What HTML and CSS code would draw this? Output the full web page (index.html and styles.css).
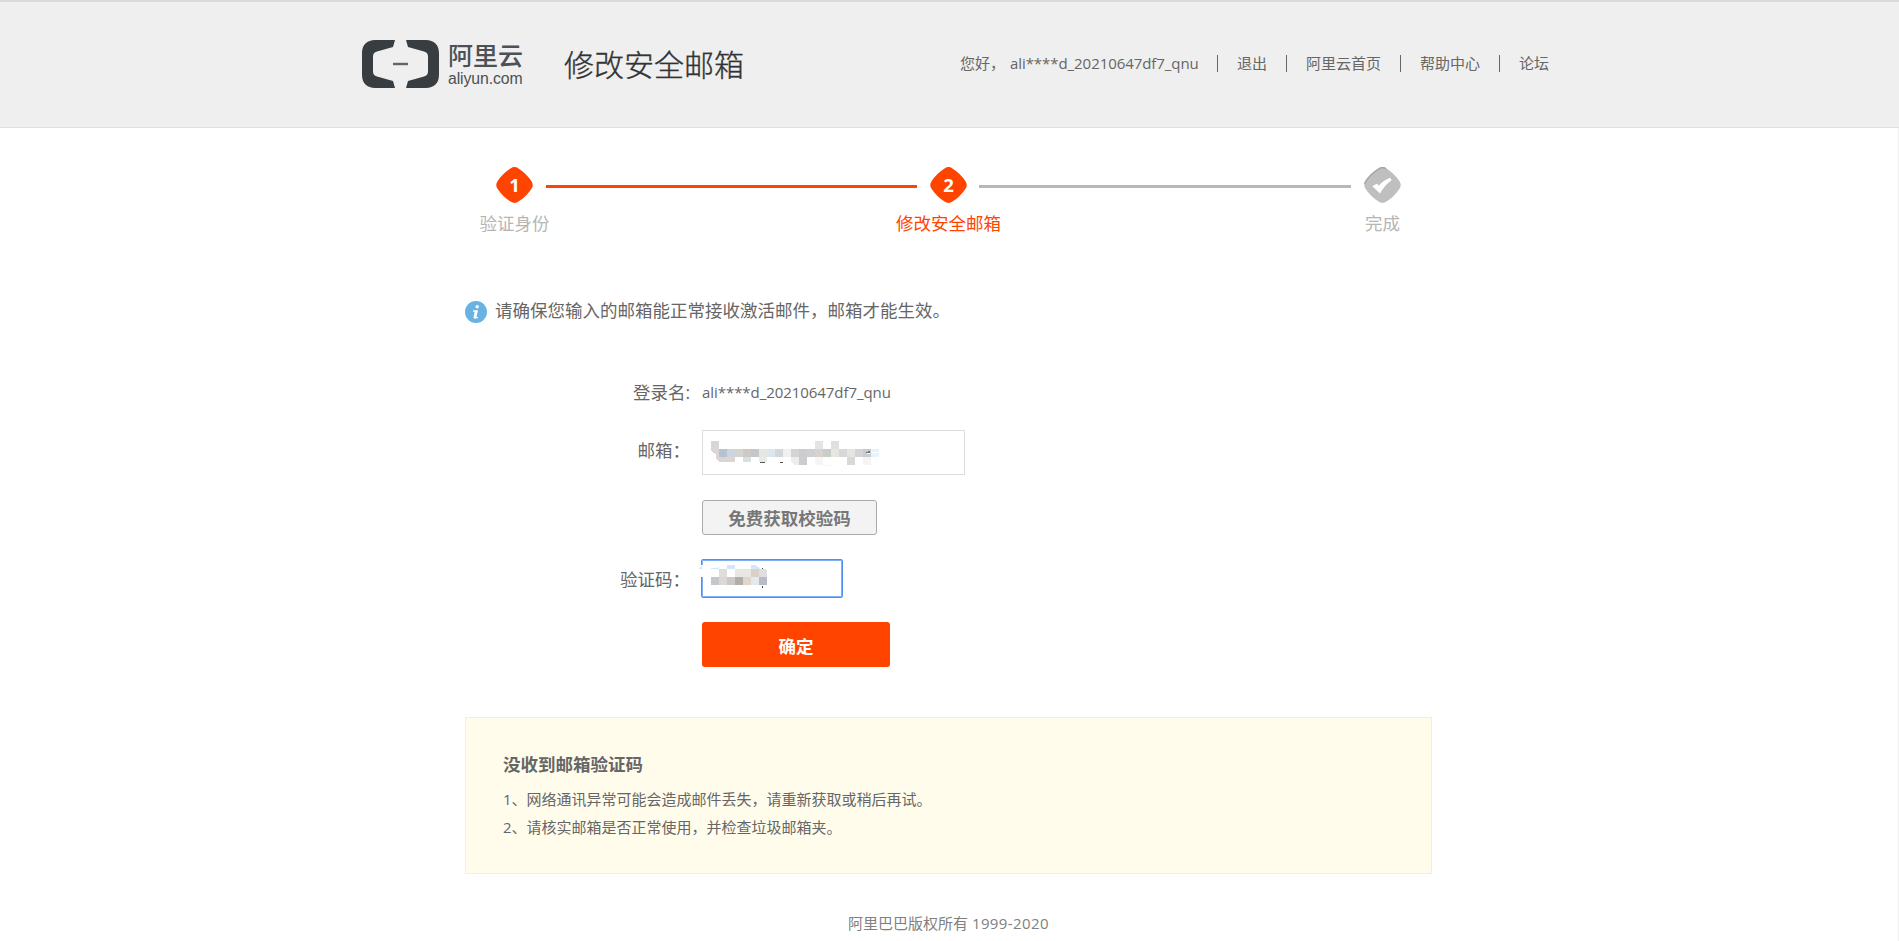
FILE: index.html
```html
<!DOCTYPE html>
<html lang="zh-CN">
<head>
<meta charset="utf-8">
<title>修改安全邮箱</title>
<link rel="stylesheet" href="styles.css">
</head>
<body>
<header class="header">
  <div class="header-inner">
    <div class="logo">
      <svg class="logo-mark" width="77" height="48" viewBox="0 0 77 48">
        <path d="M33 0H13C5 0 0 5 0 13v22c0 8 5 13 13 13h20l-2-7-16-4.500q-4-1-4-5V16.500q0-4 4-5L31 7zM44 0h20c8 0 13 5 13 13v22c0 8-5 13-13 13H44l2-7 16-4.500q4-1 4-5V16.500q0-4-4-5L46 7z" fill="#373d41"/>
        <path d="M31 24h15" stroke="#5f6669" stroke-width="2.4"/>
      </svg>
      <div class="logo-text"><span class="logo-cn">阿里云</span><span class="logo-en">aliyun.com</span></div>
    </div>
    <h1 class="title">修改安全邮箱</h1>
    <nav class="nav">
      <span class="hello">您好，</span><span class="account">ali****d_20210647df7_qnu</span>
      <a>退出</a><a>阿里云首页</a><a>帮助中心</a><a>论坛</a>
    </nav>
  </div>
</header>
<main class="main">
  <div class="steps">
    <div class="step done">
      <div class="mark"><svg width="37" height="36" viewBox="0 0 37 36"><path d="M14.5 1.4Q18.5-1.2 22.5 1.4 30.5 6.500 35.500 14.200 38 18 35.500 21.800 30.500 29.500 22.500 34.600 18.500 37.200 14.500 34.600 6.500 29.500 1.500 21.800-1 18 1.500 14.200 6.500 6.500 14.500 1.400Z" fill="#ff4400"/></svg><b>1</b></div>
      <span class="step-name">验证身份</span>
    </div>
    <i class="line line-on"></i>
    <div class="step now">
      <div class="mark"><svg width="37" height="36" viewBox="0 0 37 36"><path d="M14.5 1.4Q18.5-1.2 22.5 1.4 30.5 6.500 35.500 14.200 38 18 35.500 21.800 30.500 29.500 22.500 34.600 18.500 37.200 14.500 34.600 6.500 29.500 1.500 21.800-1 18 1.500 14.200 6.500 6.500 14.500 1.400Z" fill="#ff4400"/></svg><b>2</b></div>
      <span class="step-name">修改安全邮箱</span>
    </div>
    <i class="line"></i>
    <div class="step">
      <div class="mark"><svg width="37" height="36" viewBox="0 0 37 36"><path d="M14.500 1.400Q18.500-1.200 22.500 1.400 30.500 6.500 35.500 14.200 38 18 35.500 21.800 30.500 29.500 22.500 34.600 18.500 37.200 14.500 34.600 6.500 29.500 1.500 21.800-1 18 1.500 14.200 6.500 6.500 14.500 1.400Z" fill="#bfbfbf"/><path d="M.9 17Q1 15 1.900 14 7 6.500 14.900 1.800 18.500-.6 22.100 1.800" fill="none" stroke="#a9a5a2" stroke-width="1.500"/><path d="M8.300 19.300l4.400-2.500 2.300 1.700Q19 13.500 25.500 11q2 0 2 2.200-7 5-11.500 13.300z" fill="#fff"/></svg></div>
      <span class="step-name step-name-end">完成</span>
    </div>
  </div>

  <div class="tip">
    <svg width="22" height="22" viewBox="0 0 22 22"><circle cx="11" cy="11" r="11" fill="#68b3e2"/><circle cx="12.200" cy="5.700" r="1.700" fill="#fff"/><path d="M8.300 9.200h4.700l-1.500 6.400q-.2 1 1.700.2l-.3 1.200q-4.800 2-4.300-1l1.100-5.200H8z" fill="#fff"/></svg>
    <span>请确保您输入的邮箱能正常接收激活邮件，邮箱才能生效。</span>
  </div>

  <form class="form">
    <div class="row row-name"><label>登录名:</label><span class="account">ali****d_20210647df7_qnu</span></div>
    <div class="row row-mail"><label>邮箱：</label>
      <div class="field field-mail">
        <svg width="180" height="28" viewBox="0 0 180 28" shape-rendering="crispEdges">
          <path d="M0 0h8v8h8v8h8v5H9l-4-3v-5l-5-3z" fill="#d9d6d5"/>
          <path d="M8 8h8v8H8z" fill="#b5c2d0"/><path d="M16 8h8v8h-8z" fill="#cfd4dc"/><path d="M24 8h8v8h-8z" fill="#d3d3cf"/>
          <path d="M32 8h8v8h-8z" fill="#cec8c7"/><path d="M40 8h8v8h-8z" fill="#c4c7ca"/><path d="M48 8h8v8h-8z" fill="#e4e7e2"/>
          <path d="M56 8h8v8h-8z" fill="#dce7ed"/><path d="M64 8h8v8h-8z" fill="#d5d6d8"/><path d="M72 8h8v8h-8z" fill="#f0f0ef"/>
          <path d="M80 8h8v8h-8z" fill="#d3d3d4"/><path d="M88 8h8v8h-8z" fill="#cacdcc"/><path d="M96 8h8v8h-8z" fill="#cfced2"/>
          <path d="M104 8h8v8h-8z" fill="#d8d2cf"/><path d="M112 8h8v8h-8z" fill="#c9cdca"/><path d="M120 8h8v8h-8z" fill="#e8e6e0"/>
          <path d="M128 8h8v8h-8z" fill="#d8d7d7"/><path d="M136 8h8v8h-8z" fill="#e6e5e4"/><path d="M144 8h8v8h-8z" fill="#d1d3d4"/>
          <path d="M152 8h8v8h-8z" fill="#c8cccd"/><path d="M160 8h8v3h-8zM160 12h8v4h-8z" fill="#e6f3ff"/>
          <path d="M104 0h8v8h-8z" fill="#e3e4e8"/><path d="M120 0h8v8h-8z" fill="#dfe1e1"/>
          <path d="M32 16h8v5h-8z" fill="#d9dee1"/><path d="M48 16h8v5h-8z" fill="#e9e9e9"/><path d="M80 16h8v8h-5l-3-3z" fill="#eeedec"/>
          <path d="M88 16h8v8h-8z" fill="#cdcbce"/><path d="M104 16h8v8h-8zM152 16h8v8h-8z" fill="#f5f5f5"/><path d="M136 16h8v8h-8z" fill="#d8d8d7"/>
          <path d="M112 24h8v1h-8z" fill="#f5f5f5"/><path d="M49 21h5v1h-5zM69 21h3v1h-3z" fill="#555"/>
          <path d="M155 11h4v1h-5zM157 10h2v1h-2z" fill="#66737f"/><path d="M156 12h3v1h-3z" fill="#fff"/>
        </svg>
      </div>
    </div>
    <div class="row row-send"><label></label><button type="button" class="btn-send">免费获取校验码</button></div>
    <div class="row row-code"><label>验证码：</label>
      <div class="field field-code">
        <svg width="72" height="34" viewBox="0 0 72 34" shape-rendering="crispEdges">
          <path d="M1 5h20v12H1z" fill="#fff"/>
          <path d="M0 9l4-4v4zM13 8h6l2-2v3h-8zM29 5h8v4h-8zM53 5h4l6 4h-10z" fill="#d3e6fc"/>
          <path d="M21 9h8v8h-8z" fill="#dfdcda"/><path d="M37 9h8v8h-8zM45 9h8v8h-8z" fill="#e9e7e4"/><path d="M53 9h8v8h-8z" fill="#dbd0c9"/><path d="M61 9h6l2 2v6h-8z" fill="#dfdfe1"/>
          <path d="M13 17h8v8h-8z" fill="#c5c8ca"/><path d="M21 17h8v8h-8z" fill="#dad9d8"/><path d="M29 17h8v8h-8z" fill="#cdc8c5"/><path d="M37 17h8v8h-8z" fill="#b0afaa"/>
          <path d="M45 17h8v8h-8z" fill="#e0d6ce"/><path d="M53 17h8v8h-8z" fill="#e6e9ec"/><path d="M61 17h8v8h-8z" fill="#babbc8"/>
          <path d="M64 8h1v1h-1zM64 26h1v2h-1z" fill="#444"/>
        </svg>
      </div>
    </div>
    <div class="row row-ok"><label></label><button type="button" class="btn-ok">确定</button></div>
  </form>

  <section class="notice">
    <h2>没收到邮箱验证码</h2>
    <p>1、网络通讯异常可能会造成邮件丢失，请重新获取或稍后再试。</p>
    <p>2、请核实邮箱是否正常使用，并检查垃圾邮箱夹。</p>
  </section>
</main>
<footer class="footer">阿里巴巴版权所有 <span class="years">1999-2020</span></footer>
</body>
</html>
```

FILE: styles.css
```css
* { box-sizing: border-box; }
html { background: #fff; }
body {
  margin: 0;
  height: 941px;
  overflow: hidden;
  color: #666;
  font-family: "Open Sans", "Noto Sans CJK SC", sans-serif;
  font-size: 15px;
  line-height: 28px;
  box-shadow: inset -1px 0 #f0f0f0;
}
.header {
  height: 128px;
  background: #efefef;
  border-top: 2px solid #d9d9df;
  border-bottom: 1px solid #e0e0e0;
}
.header-inner {
  display: flex;
  align-items: flex-start;
  width: 1187px;
  margin-left: 362px;
}
.logo { display: flex; gap: 9px; margin-top: 38px; width: 202px; }
.logo-mark { display: block; }
.logo-text { display: flex; flex-direction: column; color: #4b5155; white-space: nowrap; }
.logo-cn { font-size: 25px; line-height: 26px; margin-top: 2px; font-weight: 500; }
.logo-en { font-family: "Liberation Sans", sans-serif; font-size: 15.8px; line-height: 18px; margin-top: 2px; letter-spacing: -.1px; }
.title { margin: 39px 0 0; font-size: 30px; line-height: 44px; font-weight: 300; color: #333; font-family: "Noto Sans CJK SC", sans-serif; -webkit-text-stroke: .35px #333; }
.nav { display: flex; align-items: center; margin: 47px 0 0 auto; white-space: nowrap; }
.hello { width: 50px; }
.account { width: 188px; letter-spacing: -.06px; white-space: nowrap; }
.nav a { display: flex; align-items: center; }
.nav a::before { content: ""; width: 1px; height: 17px; margin: 0 19px; background: #666; }
.main { width: 967px; margin-left: 465px; }
.steps { display: flex; height: 133px; padding: 39px 0 0 31px; }
.step { display: flex; flex-direction: column; align-items: center; width: 37px; color: #b5b5b5; }
.now { color: #ff4400; }
.mark { display: grid; width: 37px; height: 36px; }
.mark > * { grid-area: 1 / 1; }
.mark b { color: #fff; font-size: 18.5px; line-height: 35px; text-align: center; }
.step-name { margin-top: 6px; font-size: 17.5px; line-height: 28px; white-space: nowrap; }
.line { width: 371px; height: 3px; margin: 18px 13px 0; background: #b8b8b8; }
.line:not(.line-on) { width: 372px; margin: 18px 13px 0 12px; }
.line-on { background: #ff4400; }
.tip { display: flex; align-items: center; gap: 8px; margin-top: 35px; height: 30px; font-size: 17.5px; }
.tip svg { margin-top: 1px; }
.tip span { line-height: 28px; margin-top: -2px; }
.form { margin-top: 52px; }
.row { display: flex; align-items: center; gap: 12px; }
.row label { width: 225px; text-align: right; font-size: 17.5px; line-height: 28px; white-space: nowrap; }
.row-name { height: 28px; }
.row-mail { margin-top: 24px; }
.row-mail label { margin-top: -6px; }
.field { background: #fff; border: 1px solid #ddd; }
.field-mail { width: 263px; height: 45px; padding: 10px 0 0 8px; }
.field svg { display: block; }
.row-send { margin-top: 25px; }
.btn-send, .btn-ok { display: block; font: bold 17.5px/28px "Noto Sans CJK SC", sans-serif; padding: 0; }
.btn-send { width: 175px; height: 35px; color: #777; background: #f3f3f3; border: 1px solid #aaa; border-radius: 3px; }
.row-code { margin-top: 24px; gap: 11px; }
.field-code { width: 142px; height: 39px; border: 1px solid #4d90f0; border-radius: 2px; box-shadow: inset 0 0 0 1px #7db0f8; }
.field-code svg { margin-left: -4px; }
.row-ok { margin-top: 24px; }
.btn-ok { width: 188px; height: 45px; padding-top: 3px; color: #fff; background: #ff4400; border: 0; border-radius: 3px; }
.notice { height: 157px; margin-top: 50px; padding: 32px 37px; background: #fffcec; border: 1px solid #faeecb; }
.notice h2 { margin: 0 0 7px; font-size: 17.5px; line-height: 28px; }
.notice p { margin: 0; line-height: 28px; }
.footer { margin: 35px 0 0 848px; color: #808080; white-space: nowrap; }
.years { letter-spacing: .4px; }
```
